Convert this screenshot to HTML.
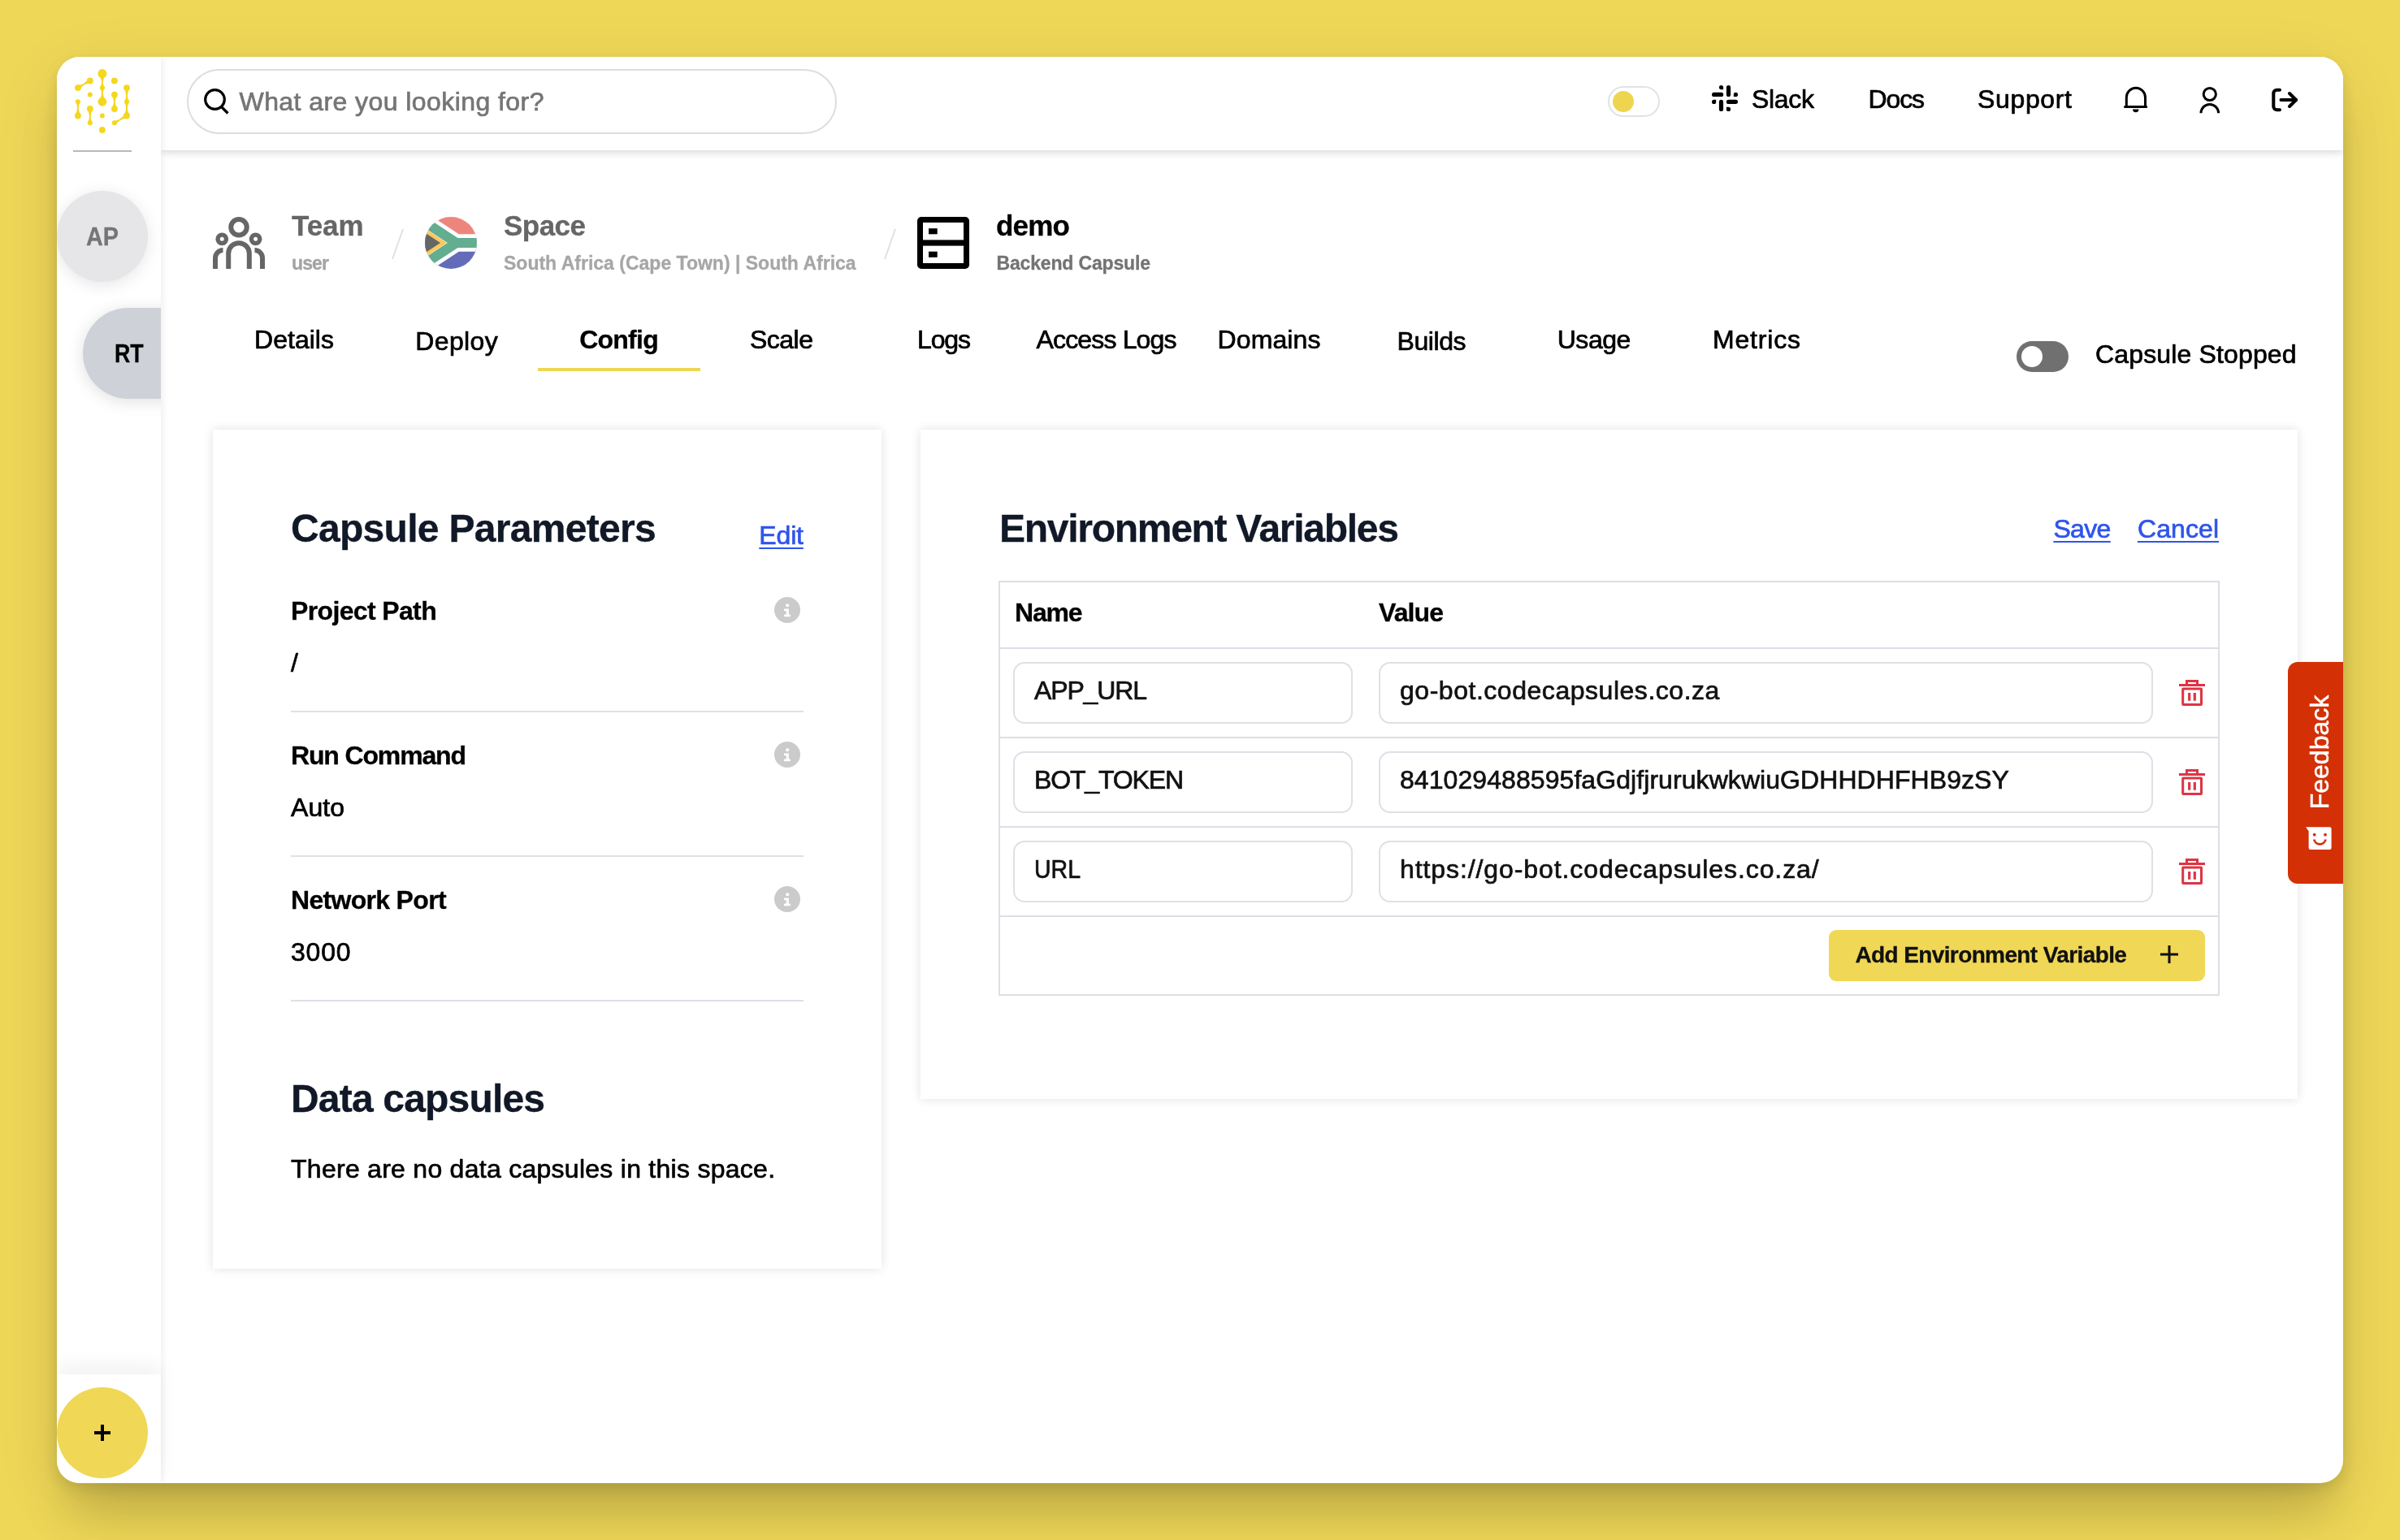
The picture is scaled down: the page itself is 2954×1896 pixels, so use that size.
<!DOCTYPE html>
<html lang="en">
<head>
<meta charset="utf-8">
<title>Code Capsules - Config</title>
<style>
*{box-sizing:border-box;margin:0;padding:0}
html,body{width:2954px;height:1896px;overflow:hidden}
body{background:#eed757;font-family:"Liberation Sans",Arial,sans-serif;color:#000;position:relative}
.t{position:absolute;line-height:1;white-space:nowrap;-webkit-text-stroke:.7px currentColor}
.b{-webkit-text-stroke:.3px currentColor}
.abs{position:absolute}
a{color:#2f54eb;text-decoration:underline;text-decoration-thickness:2px;text-underline-offset:4px}
#win{position:absolute;left:70px;top:70px;width:2814px;height:1756px;background:#fff;border-radius:28px;box-shadow:0 50px 60px -14px rgba(0,0,0,.17),0 6px 18px rgba(0,0,0,.11),0 20px 90px rgba(0,0,0,.07);overflow:hidden}
#page{position:absolute;left:-70px;top:-70px;width:2954px;height:1896px;will-change:transform}
#sidebar{position:absolute;left:70px;top:70px;width:128px;height:1756px;background:#fff;box-shadow:2px 0 8px rgba(0,0,0,.07)}
#header{position:absolute;left:198px;top:70px;width:2686px;height:115px;background:#fff;box-shadow:0 2px 10px rgba(0,0,0,.18)}
.card{position:absolute;background:#fff;box-shadow:0 0 12px rgba(0,0,0,.12)}
.hr{position:absolute;height:2px;background:#dde1e7}
.inp{position:absolute;height:76px;border:2px solid #dde1e6;border-radius:14px;background:#fff}
.row{position:absolute;left:1230px;width:1501px;height:2px;background:#dcdfe5}
</style>
</head>
<body>
<div id="win">
<div id="page">
<!-- breadcrumb -->
<svg class="abs" style="left:262px;top:267px" width="64" height="64" viewBox="0 0 64 64" fill="none" stroke="#666" stroke-width="6">
<circle cx="32" cy="12.75" r="9.75"/>
<circle cx="11.25" cy="27.3" r="5.2" stroke-width="5.4"/>
<circle cx="52.6" cy="27.3" r="5.2" stroke-width="5.4"/>
<path d="M19.2 64V45a12.8 12.8 0 0 1 25.6 0V64"/>
<path d="M3 64V50.5a9.5 9.5 0 0 1 9.5-9.5"/>
<path d="M61 64V50.5a9.5 9.5 0 0 0-9.5-9.5"/>
</svg>
<div class="t b" style="left:359.0px;top:260.4px;font-size:35px;font-weight:700;color:#666;letter-spacing:-0.11px;">Team</div>
<div class="t b" style="left:359.0px;top:312.5px;font-size:23px;font-weight:700;color:#a3a3a3;letter-spacing:-0.86px;">user</div>
<svg class="abs" style="left:478px;top:278px" width="24" height="46" viewBox="0 0 24 46"><path d="M18 4L5 41" stroke="#dde1e7" stroke-width="2"/></svg>
<svg class="abs" style="left:523px;top:267px" width="64" height="64" viewBox="0 0 64 64">
<defs><clipPath id="fc"><circle cx="32" cy="32" r="32"/></clipPath></defs>
<g clip-path="url(#fc)">
<rect x="0" y="0" width="64" height="32" fill="#ee857d"/>
<rect x="0" y="32" width="64" height="32" fill="#646cb9"/>
<path d="M-22 -7.9L38.7 32L-22 71.9M38.7 32H80" fill="none" stroke="#fff" stroke-width="21.4"/>
<path d="M-22 -7.9L38.7 32L-22 71.9M38.7 32H80" fill="none" stroke="#63ad91" stroke-width="12"/>
<path d="M-10 7.700L27 32L-10 56.300Z" fill="#fbc95c"/>
<path d="M-10 13L19 32L-10 51Z" fill="#666"/>
</g></svg>
<div class="t b" style="left:620.0px;top:260.4px;font-size:35px;font-weight:700;color:#666;letter-spacing:-0.53px;">Space</div>
<div class="t b" style="left:620.0px;top:312.5px;font-size:23px;font-weight:700;color:#a6a6a6;">South Africa (Cape Town) | South Africa</div>
<svg class="abs" style="left:1084px;top:278px" width="24" height="46" viewBox="0 0 24 46"><path d="M18 4L5 41" stroke="#dde1e7" stroke-width="2"/></svg>
<svg class="abs" style="left:1129px;top:267px" width="64" height="64" viewBox="0 0 64 64">
<rect x="3.5" y="3.5" width="57" height="57" rx="1.5" fill="none" stroke="#000" stroke-width="7"/>
<rect x="3" y="28.4" width="58" height="7.2" fill="#000"/>
<rect x="14" y="14.2" width="10.7" height="7.1" fill="#000"/>
<rect x="14" y="42.7" width="10.7" height="7.1" fill="#000"/>
</svg>
<div class="t b" style="left:1226.0px;top:260.4px;font-size:35px;font-weight:700;letter-spacing:-0.79px;">demo</div>
<div class="t b" style="left:1226.5px;top:312.5px;font-size:23px;font-weight:700;color:#737373;letter-spacing:-0.16px;">Backend Capsule</div>
<!-- tabs -->
<div class="t" style="left:313.0px;top:402.2px;font-size:32px;letter-spacing:0.03px;">Details</div>
<div class="t" style="left:511.2px;top:403.9px;font-size:32px;letter-spacing:0.40px;">Deploy</div>
<div class="t b" style="left:713.2px;top:402.2px;font-size:32px;font-weight:700;letter-spacing:-0.76px;">Config</div>
<div class="t" style="left:923.0px;top:402.2px;font-size:32px;letter-spacing:-0.51px;">Scale</div>
<div class="t" style="left:1129.0px;top:402.2px;font-size:32px;letter-spacing:-1.13px;">Logs</div>
<div class="t" style="left:1275.5px;top:402.2px;font-size:32px;letter-spacing:-0.84px;">Access Logs</div>
<div class="t" style="left:1498.5px;top:402.2px;font-size:32px;letter-spacing:0.12px;">Domains</div>
<div class="t" style="left:1719.5px;top:403.9px;font-size:32px;letter-spacing:-0.43px;">Builds</div>
<div class="t" style="left:1916.7px;top:402.2px;font-size:32px;letter-spacing:-0.45px;">Usage</div>
<div class="t" style="left:2108.0px;top:402.2px;font-size:32px;letter-spacing:0.82px;">Metrics</div>
<div class="abs" style="left:662px;top:453px;width:200px;height:4px;background:#efd755"></div>
<div class="abs" style="left:2482px;top:420px;width:64px;height:38px;border-radius:19px;background:#707070"><div class="abs" style="left:6px;top:6px;width:26px;height:26px;border-radius:50%;background:#fff"></div></div>
<div class="t" style="left:2579.0px;top:419.9px;font-size:32px;letter-spacing:0.15px;">Capsule Stopped</div>
<!-- capsule parameters card -->
<div class="card" style="left:262px;top:529px;width:823px;height:1033px"></div>
<h2 class="t b" style="left:358.0px;top:627.4px;font-size:48px;font-weight:700;color:#111827;letter-spacing:-0.70px;">Capsule Parameters</h2>
<a class="t" style="left:934.3px;top:642.9px;font-size:32px;color:#2f54eb;letter-spacing:-0.15px;">Edit</a>
<div class="t b" style="left:358.0px;top:735.9px;font-size:32px;font-weight:700;letter-spacing:-0.64px;">Project Path</div>
<svg class="abs" style="left:953.2px;top:734.8px" width="32" height="32" viewBox="0 0 32 32"><circle cx="16" cy="16" r="16" fill="#cbcbcb"/><circle cx="16.200" cy="10.200" r="2.050" fill="#fff"/><path d="M12.800 14.400H17.850V21.400H19.200a.7.700 0 0 1 .7.700V23.600a.7.700 0 0 1-.7.700H12.550a.7.700 0 0 1-.7-.7V22.100a.7.700 0 0 1 .7-.7H14.800V17.200H12.800a.9.900 0 0 1-.9-.9V15.300a.9.900 0 0 1 .9-.9z" fill="#fff"/></svg>
<div class="t" style="left:358.0px;top:799.9px;font-size:32px;">/</div>
<div class="hr" style="left:358px;top:875px;width:631px"></div>
<div class="t b" style="left:358.0px;top:913.9px;font-size:32px;font-weight:700;letter-spacing:-1.15px;">Run Command</div>
<svg class="abs" style="left:953.2px;top:912.8px" width="32" height="32" viewBox="0 0 32 32"><circle cx="16" cy="16" r="16" fill="#cbcbcb"/><circle cx="16.200" cy="10.200" r="2.050" fill="#fff"/><path d="M12.800 14.400H17.850V21.400H19.200a.7.700 0 0 1 .7.700V23.600a.7.700 0 0 1-.7.700H12.550a.7.700 0 0 1-.7-.7V22.100a.7.700 0 0 1 .7-.7H14.800V17.200H12.800a.9.900 0 0 1-.9-.9V15.300a.9.900 0 0 1 .9-.9z" fill="#fff"/></svg>
<div class="t" style="left:358.0px;top:977.9px;font-size:32px;letter-spacing:0.06px;">Auto</div>
<div class="hr" style="left:358px;top:1053px;width:631px"></div>
<div class="t b" style="left:358.0px;top:1091.9px;font-size:32px;font-weight:700;letter-spacing:-0.69px;">Network Port</div>
<svg class="abs" style="left:953.2px;top:1090.8px" width="32" height="32" viewBox="0 0 32 32"><circle cx="16" cy="16" r="16" fill="#cbcbcb"/><circle cx="16.200" cy="10.200" r="2.050" fill="#fff"/><path d="M12.800 14.400H17.850V21.400H19.200a.7.700 0 0 1 .7.700V23.600a.7.700 0 0 1-.7.700H12.550a.7.700 0 0 1-.7-.7V22.100a.7.700 0 0 1 .7-.7H14.800V17.200H12.800a.9.900 0 0 1-.9-.9V15.300a.9.900 0 0 1 .9-.9z" fill="#fff"/></svg>
<div class="t" style="left:358.0px;top:1155.9px;font-size:32px;letter-spacing:0.80px;">3000</div>
<div class="hr" style="left:358px;top:1231px;width:631px"></div>
<h2 class="t b" style="left:358.0px;top:1329.4px;font-size:48px;font-weight:700;color:#111827;letter-spacing:-0.82px;">Data capsules</h2>
<div class="t" style="left:358.0px;top:1423.4px;font-size:32px;letter-spacing:0.27px;">There are no data capsules in this space.</div>
<!-- environment variables card -->
<div class="card" style="left:1133px;top:529px;width:1695px;height:824px"></div>
<h2 class="t b" style="left:1230.0px;top:626.9px;font-size:48px;font-weight:700;color:#111827;letter-spacing:-1.28px;">Environment Variables</h2>
<a class="t" style="left:2527.4px;top:634.9px;font-size:32px;color:#2f54eb;letter-spacing:-0.65px;">Save</a>
<a class="t" style="left:2631.0px;top:634.9px;font-size:32px;color:#2f54eb;letter-spacing:0.08px;">Cancel</a>
<div class="abs" style="left:1229px;top:715px;width:1503px;height:511px;border:2px solid #dcdfe5"></div>
<div class="row" style="top:797px"></div>
<div class="row" style="top:907px"></div>
<div class="row" style="top:1017px"></div>
<div class="row" style="top:1127px"></div>
<div class="t b" style="left:1249.0px;top:737.9px;font-size:32px;font-weight:700;letter-spacing:-1.22px;">Name</div>
<div class="t b" style="left:1697.0px;top:737.9px;font-size:32px;font-weight:700;letter-spacing:-0.90px;">Value</div>
<div class="inp" style="left:1247px;top:815px;width:418px"></div>
<div class="inp" style="left:1697px;top:815px;width:953px"></div>
<div class="t" style="left:1273.0px;top:833.9px;font-size:32px;color:#111;letter-spacing:-1.14px;">APP_URL</div>
<div class="t" style="left:1723.0px;top:833.9px;font-size:32px;color:#111;letter-spacing:0.53px;">go-bot.codecapsules.co.za</div>
<svg class="abs" style="left:2682px;top:837px" width="32" height="32" viewBox="0 0 32 32" fill="none" stroke="#dc3545" stroke-width="3">
<path d="M0 6.500h32"/><path d="M9.500 5.500V1.500h13V5.500"/><rect x="4.700" y="10.900" width="22.800" height="19.600" rx=".6"/><path d="M12.700 16v9.800M19.300 16v9.800" stroke-width="3.200"/></svg>
<div class="inp" style="left:1247px;top:925px;width:418px"></div>
<div class="inp" style="left:1697px;top:925px;width:953px"></div>
<div class="t" style="left:1273.0px;top:943.9px;font-size:32px;color:#111;letter-spacing:-1.15px;">BOT_TOKEN</div>
<div class="t" style="left:1723.0px;top:943.9px;font-size:32px;color:#111;letter-spacing:0.07px;">841029488595faGdjfjrurukwkwiuGDHHDHFHB9zSY</div>
<svg class="abs" style="left:2682px;top:947px" width="32" height="32" viewBox="0 0 32 32" fill="none" stroke="#dc3545" stroke-width="3">
<path d="M0 6.500h32"/><path d="M9.500 5.500V1.500h13V5.500"/><rect x="4.700" y="10.900" width="22.800" height="19.600" rx=".6"/><path d="M12.700 16v9.800M19.300 16v9.800" stroke-width="3.200"/></svg>
<div class="inp" style="left:1247px;top:1035px;width:418px"></div>
<div class="inp" style="left:1697px;top:1035px;width:953px"></div>
<div class="t" style="left:1273.0px;top:1053.9px;font-size:32px;color:#111;transform:scaleX(0.8904);transform-origin:0 50%;">URL</div>
<div class="t" style="left:1723.0px;top:1053.9px;font-size:32px;color:#111;letter-spacing:0.91px;">https://go-bot.codecapsules.co.za/</div>
<svg class="abs" style="left:2682px;top:1057px" width="32" height="32" viewBox="0 0 32 32" fill="none" stroke="#dc3545" stroke-width="3">
<path d="M0 6.500h32"/><path d="M9.500 5.500V1.500h13V5.500"/><rect x="4.700" y="10.900" width="22.800" height="19.600" rx=".6"/><path d="M12.700 16v9.800M19.300 16v9.800" stroke-width="3.200"/></svg>
<div class="abs" style="left:2251px;top:1145px;width:463px;height:63px;border-radius:9px;background:#f0d755"></div>
<div class="t b" style="left:2283.4px;top:1161.6px;font-size:28px;font-weight:700;color:#111;letter-spacing:-0.61px;">Add Environment Variable</div>
<svg class="abs" style="left:2658px;top:1163px" width="24" height="24" viewBox="0 0 24 24"><path d="M12 1v22M1 12h22" stroke="#111" stroke-width="3"/></svg>
<!-- feedback -->
<div class="abs" style="left:2816px;top:815px;width:80px;height:273px;border-radius:12px;background:#d33006"></div>
<div class="t" style="left:2854.6px;top:925.6px;font-size:32px;color:#fff;-webkit-text-stroke:.5px #fff;transform:translate(-50%,-50%) rotate(-90deg);transform-origin:center">Feedback</div>
<svg class="abs" style="left:2836px;top:1016px" width="36" height="32" viewBox="0 0 36 32">
<path d="M2 2.200H31.400Q33.600 2.200 33.600 4.400V27.800Q33.600 30 31.400 30H7.800Q5.600 30 5.600 27.800V7.200Z" fill="#fff"/>
<circle cx="12.700" cy="11.700" r="1.900" fill="#d33006"/><circle cx="26" cy="11.700" r="1.900" fill="#d33006"/>
<path d="M12.200 17.500a7.300 7.300 0 0 0 14.300 0" fill="none" stroke="#d33006" stroke-width="2.600"/></svg>
<!-- header -->
<div id="header"></div>
<div class="abs" style="left:230px;top:85px;width:800px;height:80px;border:2px solid #d9dee4;border-radius:40px;background:#fff"></div>
<svg class="abs" style="left:250px;top:108px" width="34" height="34" viewBox="0 0 34 34" fill="none" stroke="#000" stroke-width="3.2"><circle cx="14.5" cy="14.5" r="11.8"/><path d="M22.5 23.5L30.5 31.5"/></svg>
<div class="t" style="left:294.5px;top:109.1px;font-size:32px;color:#757575;letter-spacing:0.43px;">What are you looking for?</div>
<div class="abs" style="left:1979px;top:106px;width:64px;height:38px;border-radius:19px;border:2px solid #dfe3e8;background:#fff"><div class="abs" style="left:4px;top:4px;width:26px;height:26px;border-radius:50%;background:#efd54f"></div></div>
<svg class="abs" style="left:2107.2px;top:105px" width="32" height="32" viewBox="0 0 32 32" fill="#000">
<rect x="17.9" y="0" width="5.2" height="14" rx="2.6"/>
<rect x="0" y="8.8" width="14.2" height="5.2" rx="2.6"/>
<rect x="8.9" y="17.8" width="5.2" height="14.2" rx="2.6"/>
<rect x="17.9" y="17.8" width="14.2" height="5.2" rx="2.6"/>
<path d="M11.5 0a2.6 2.6 0 0 1 2.6 2.6V5.2H11.5a2.6 2.6 0 0 1 0-5.2z"/>
<path d="M26.8 14V11.4a2.6 2.6 0 1 1 2.6 2.6z"/>
<path d="M5.2 17.8V20.4a2.6 2.6 0 1 1-2.6-2.6z"/>
<path d="M17.9 26.800H20.500a2.6 2.6 0 1 1-2.6 2.6z"/>
</svg>
<div class="t" style="left:2156.0px;top:105.9px;font-size:32px;letter-spacing:-0.31px;">Slack</div>
<div class="t" style="left:2299.5px;top:105.9px;font-size:32px;letter-spacing:-1.14px;">Docs</div>
<div class="t" style="left:2434.0px;top:105.9px;font-size:32px;letter-spacing:0.65px;">Support</div>
<svg class="abs" style="left:2612px;top:105px" width="34" height="36" viewBox="0 0 34 36" fill="none" stroke="#000" stroke-width="3">
<path d="M5.300 26V14.900a11.600 11.600 0 0 1 23.200 0V26"/><path d="M3.500 26.500h26.200" stroke-linecap="round"/><path d="M13 29.600h7.500a3.750 3.600 0 0 1-7.500 0z" fill="#000" stroke="none"/></svg>
<svg class="abs" style="left:2704px;top:105px" width="32" height="36" viewBox="0 0 32 36" fill="none" stroke="#000" stroke-width="3">
<circle cx="15.800" cy="11" r="7.6"/><path d="M5 34.200a10.800 10.800 0 0 1 21.600 0"/></svg>
<svg class="abs" style="left:2794px;top:106px" width="36" height="34" viewBox="0 0 36 34" fill="none" stroke="#000" stroke-width="4" stroke-linecap="round" stroke-linejoin="round">
<path d="M12 4.800H8.500a4.200 4.200 0 0 0-4.200 4.200V25a4.200 4.200 0 0 0 4.200 4.200H12"/><path d="M13.500 17H32"/><path d="M24 9l8 8-8 8"/></svg>
<!-- sidebar -->
<div id="sidebar"></div>
<svg class="abs" style="left:80px;top:75px" width="100" height="100" viewBox="0 0 100 100" fill="#f4d71e"><path d="M17.71 36.20Q20.43 31.44 23.78 29.48Q27.13 27.53 32.61 27.50L28.99 21.30Q26.27 26.06 22.92 28.02Q19.57 29.97 14.09 30.00Z"/><path d="M13.14 50.30Q15.05 54.41 15.05 57.78Q15.05 62.15 12.31 67.50L19.49 67.50Q16.75 62.15 16.75 57.78Q16.75 54.41 18.66 50.30Z"/><path d="M27.21 58.80Q29.95 64.24 29.95 68.69Q29.95 72.12 28.04 76.30L33.56 76.30Q31.65 72.12 31.65 68.69Q31.65 64.24 34.39 58.80Z"/><path d="M40.84 15.60Q45.05 21.83 45.05 26.92Q45.05 29.70 43.14 33.10L48.66 33.10Q46.75 29.70 46.75 26.92Q46.75 21.83 50.96 15.60Z"/><path d="M43.14 33.10Q45.05 36.48 45.05 39.24Q45.05 44.22 40.93 50.30L50.87 50.30Q46.75 44.22 46.75 39.24Q46.75 36.48 48.66 33.10Z"/><path d="M57.31 41.60Q60.05 46.41 60.05 50.35Q60.05 54.29 57.31 59.10L64.49 59.10Q61.75 54.29 61.75 50.35Q61.75 46.41 64.49 41.60Z"/><path d="M72.41 33.10Q75.15 38.45 75.15 42.82Q75.15 46.19 73.24 50.30L78.76 50.30Q76.85 46.19 76.85 42.82Q76.85 38.45 79.59 33.10Z"/><path d="M73.24 50.30Q75.15 54.41 75.15 57.78Q75.15 62.15 72.41 67.50L79.59 67.50Q76.85 62.15 76.85 57.78Q76.85 54.41 78.76 50.30Z"/><path d="M74.19 64.40Q70.88 69.50 67.04 71.74Q64.08 73.46 59.51 73.92L62.29 78.68Q64.94 74.93 67.89 73.21Q71.73 70.97 77.81 70.60Z"/><circle cx="15.9" cy="33.1" r="3.9"/><circle cx="15.9" cy="50.3" r="3.0"/><circle cx="15.9" cy="67.5" r="3.9"/><circle cx="30.8" cy="24.4" r="3.9"/><circle cx="30.8" cy="41.6" r="3.0"/><circle cx="30.8" cy="58.8" r="3.9"/><circle cx="30.8" cy="76.3" r="3.0"/><circle cx="45.9" cy="15.6" r="5.5"/><circle cx="45.9" cy="33.1" r="3.0"/><circle cx="45.9" cy="50.3" r="5.4"/><circle cx="45.9" cy="67.5" r="2.9"/><circle cx="45.9" cy="85" r="3.9"/><circle cx="60.9" cy="24.4" r="3.9"/><circle cx="60.9" cy="41.6" r="3.9"/><circle cx="60.9" cy="59.1" r="3.9"/><circle cx="60.9" cy="76.3" r="3.0"/><circle cx="76.0" cy="33.1" r="3.9"/><circle cx="76.0" cy="50.3" r="3.0"/><circle cx="76.0" cy="67.5" r="3.9"/></svg>
<div class="abs" style="left:90px;top:185px;width:72px;height:2px;background:#b9b9b9"></div>
<div class="abs" style="left:70px;top:235px;width:112px;height:112px;border-radius:50%;background:#e6e6e8;box-shadow:0 4px 20px rgba(0,0,0,.10)"></div>
<div class="t b" style="left:106.0px;top:274.9px;font-size:32px;font-weight:700;color:#757575;transform:scaleX(0.8998);transform-origin:0 50%;">AP</div>
<div class="abs" style="left:102px;top:379px;width:180px;height:112px;border-radius:56px;background:#ced1d7;box-shadow:0 3px 20px rgba(0,0,0,.13);clip-path:inset(-40px 84px -40px -40px)"></div>
<div class="t b" style="left:140.6px;top:418.7px;font-size:32px;font-weight:700;transform:scaleX(0.8369);transform-origin:0 50%;">RT</div>
<div class="abs" style="left:70px;top:1692px;width:128px;height:134px;background:#fff;box-shadow:0 -12px 22px rgba(0,0,0,.05)"></div>
<div class="abs" style="left:70px;top:1708px;width:112px;height:112px;border-radius:50%;background:#f0d755"></div>
<svg class="abs" style="left:115px;top:1753px" width="22" height="22" viewBox="0 0 22 22"><path d="M11 1v20M1 11h20" stroke="#000" stroke-width="4"/></svg>
</div>
</div>
</body>
</html>
